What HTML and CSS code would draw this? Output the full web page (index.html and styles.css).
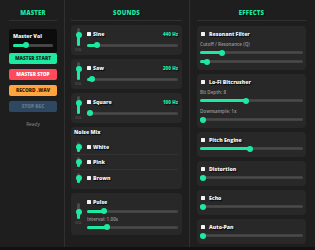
FILE: index.html
```html
<!DOCTYPE html>
<html>
<head>
<meta charset="utf-8">
<link rel="stylesheet" href="styles.css">
</head>
<body>
<div class="app">
  <section class="col col-master">
    <h2 class="col-title">MASTER</h2>
    <div class="vol-box">
      <div class="vol-box-label">Master Vol</div>
      <div class="slider-row"><div class="track" style="--v:.3"><div class="fill"></div></div></div>
    </div>
    <div class="btn-group">
      <button class="btn btn-start">MASTER START</button>
      <button class="btn btn-stop">MASTER STOP</button>
    </div>
    <div class="btn-group btn-group-rec">
      <button class="btn btn-rec">RECORD .WAV</button>
      <button class="btn btn-stoprec" disabled>STOP REC</button>
    </div>
    <div class="status">Ready</div>
  </section>

  <section class="col col-sounds">
    <h2 class="col-title">SOUNDS</h2>
    <div class="stack sounds-stack">
      <div class="card sound">
        <div class="vol">
          <div class="vtrack" style="--v:.7"><div class="vfill"></div></div>
          <span class="vol-label">VOL</span>
        </div>
        <div class="sound-main">
          <div class="sound-head">
            <label class="check"><span class="box"></span><span class="name">Sine</span></label>
            <span class="freq">440 Hz</span>
          </div>
          <div class="slider-row"><div class="track" style="--v:.08"><div class="fill"></div></div></div>
        </div>
      </div>
      <div class="card sound">
        <div class="vol">
          <div class="vtrack" style="--v:.7"><div class="vfill"></div></div>
          <span class="vol-label">VOL</span>
        </div>
        <div class="sound-main">
          <div class="sound-head">
            <label class="check"><span class="box"></span><span class="name">Saw</span></label>
            <span class="freq">200 Hz</span>
          </div>
          <div class="slider-row"><div class="track" style="--v:.025"><div class="fill"></div></div></div>
        </div>
      </div>
      <div class="card sound">
        <div class="vol">
          <div class="vtrack" style="--v:.7"><div class="vfill"></div></div>
          <span class="vol-label">VOL</span>
        </div>
        <div class="sound-main">
          <div class="sound-head">
            <label class="check"><span class="box"></span><span class="name">Square</span></label>
            <span class="freq">100 Hz</span>
          </div>
          <div class="slider-row"><div class="track" style="--v:0"><div class="fill"></div></div></div>
        </div>
      </div>
      <div class="card noise">
        <div class="card-title">Noise Mix</div>
        <div class="noise-row">
          <div class="vol"><div class="vtrack vtrack-mini" style="--v:.5"><div class="vfill"></div></div></div>
          <label class="check"><span class="box"></span><span class="name">White</span></label>
        </div>
        <div class="noise-row">
          <div class="vol"><div class="vtrack vtrack-mini" style="--v:.5"><div class="vfill"></div></div></div>
          <label class="check"><span class="box"></span><span class="name">Pink</span></label>
        </div>
        <div class="noise-row">
          <div class="vol"><div class="vtrack vtrack-mini" style="--v:.5"><div class="vfill"></div></div></div>
          <label class="check"><span class="box"></span><span class="name">Brown</span></label>
        </div>
      </div>
      <div class="card sound pulse">
        <div class="vol">
          <div class="vtrack vtrack-pulse" style="--v:.4"><div class="vfill"></div></div>
          <span class="vol-label">VOL</span>
        </div>
        <div class="sound-main">
          <div class="sound-head pulse-head">
            <label class="check"><span class="box"></span><span class="name">Pulse</span></label>
          </div>
          <div class="slider-row slider-row-s"><div class="track" style="--v:.17"><div class="fill"></div></div></div>
          <div class="fx-label">Interval: 1.00s</div>
          <div class="slider-row slider-row-s"><div class="track" style="--v:.2"><div class="fill"></div></div></div>
        </div>
      </div>
    </div>
  </section>

  <section class="col col-effects">
    <h2 class="col-title">EFFECTS</h2>
    <div class="stack fx-stack">
      <div class="card fx">
        <label class="check fx-check"><span class="box"></span><span class="name">Resonant Filter</span></label>
        <div class="fx-label">Cutoff / Resonance (Q)</div>
        <div class="slider-row"><div class="track" style="--v:.2"><div class="fill"></div></div></div>
        <div class="slider-row"><div class="track" style="--v:.04"><div class="fill"></div></div></div>
      </div>
      <div class="card fx">
        <label class="check fx-check"><span class="box"></span><span class="name">Lo-Fi Bitcrusher</span></label>
        <div class="fx-label">Bit Depth: 8</div>
        <div class="slider-row"><div class="track" style="--v:.44"><div class="fill"></div></div></div>
        <div class="fx-label">Downsample: 1x</div>
        <div class="slider-row"><div class="track" style="--v:0"><div class="fill"></div></div></div>
      </div>
      <div class="card fx">
        <label class="check fx-check"><span class="box"></span><span class="name">Pitch Engine</span></label>
        <div class="slider-row"><div class="track" style="--v:.48"><div class="fill"></div></div></div>
      </div>
      <div class="card fx">
        <label class="check fx-check"><span class="box"></span><span class="name">Distortion</span></label>
        <div class="slider-row"><div class="track" style="--v:0"><div class="fill"></div></div></div>
      </div>
      <div class="card fx">
        <label class="check fx-check"><span class="box"></span><span class="name">Echo</span></label>
        <div class="slider-row"><div class="track" style="--v:0"><div class="fill"></div></div></div>
      </div>
      <div class="card fx">
        <label class="check fx-check"><span class="box"></span><span class="name">Auto-Pan</span></label>
        <div class="slider-row"><div class="track" style="--v:0"><div class="fill"></div></div></div>
      </div>
    </div>
  </section>
</div>
</body>
</html>
```

FILE: styles.css
```css
* { box-sizing: border-box; }

html { background: #111; }

body {
  margin: 0;
  background: #111;
  font-family: "Open Sans", "Noto Sans", sans-serif;
  color: #eee;
}

.app {
  display: grid;
  grid-template-columns: 65px 125px 1fr;
  height: 247px;
  background: #1e1e1e;
  overflow: hidden;
}

.col {
  border-right: 1px solid #303030;
  min-width: 0;
}
.col-effects { border-right: none; }

.col-master { padding: 0 7px 0 9px; }
.col-sounds { padding: 0 7px 0 6px; }
.col-effects { padding: 0 9px 0 7px; }

.col-title {
  margin: 0;
  padding: 8px 0 2px;
  line-height: 10px;
  height: 21px;
  font-size: 6px;
  font-weight: 800;
  letter-spacing: 0.2px;
  color: #1de9a0;
  text-align: center;
  border-bottom: 1px solid #303030;
  text-shadow: 1px 1px 1px rgba(0,0,0,.7);
}

/* master */
.vol-box {
  margin-top: 8px;
  background: #0c0c0c;
  border-radius: 3px;
  padding: 4px 4px;
  height: 24px;
  display: flex;
  flex-direction: column;
  gap: 2px;
}
.vol-box-label {
  font-size: 5.2px;
  font-weight: 800;
  line-height: 6px;
  color: #f2f2f2;
}
.vol-box .slider-row { height: 8px; }

.btn-group {
  display: flex;
  flex-direction: column;
  gap: 5px;
}
.col-master > .btn-group:first-of-type {
  margin-top: 8px;
  padding-bottom: 4px;
  border-bottom: 1px solid #2a2a2a;
}
.btn-group-rec { padding-top: 5px; }

.btn {
  display: block;
  width: 100%;
  height: 11px;
  padding: 0;
  border: none;
  border-radius: 2px;
  font-family: inherit;
  font-size: 4.8px;
  font-weight: 800;
  line-height: 11px;
  text-align: center;
}
.btn-start { background: #1de9a0; color: #0d2b20; }
.btn-stop { background: #ff4a5c; color: #fff; }
.btn-rec { background: #ffa43f; color: #3a1e00; }
.btn-stoprec { background: #2f4862; color: #5f7893; }

.status {
  margin-top: 9px;
  font-size: 4.8px;
  line-height: 6px;
  text-align: center;
  color: #8a8a8a;
}

/* stacks */
.stack {
  display: flex;
  flex-direction: column;
  gap: 4px;
}
.sounds-stack { padding-top: 4px; }
.fx-stack { padding-top: 5px; }

.card {
  background: #282828;
  border-radius: 4px;
}

/* sliders */
.slider-row {
  height: 9px;
  display: flex;
  align-items: center;
}
.track {
  position: relative;
  flex: 1;
  height: 3px;
  border-radius: 2px;
  background: #4a4a4a;
  box-shadow: inset 0 0 0 0.5px #3a3a3a;
}
.fill {
  position: relative;
  height: 100%;
  width: calc(3px + (100% - 6px) * var(--v));
  background: #1de9a0;
  border-radius: 2px;
}
.fill::after {
  content: "";
  position: absolute;
  right: -3px;
  top: 50%;
  width: 6px;
  height: 6px;
  margin-top: -3px;
  border-radius: 50%;
  background: #1de9a0;
}

.vol {
  width: 9px;
  flex: none;
  display: flex;
  flex-direction: column;
  align-items: center;
  gap: 1px;
}
.vtrack {
  position: relative;
  width: 3px;
  height: 18px;
  border-radius: 2px;
  background: #4a4a4a;
  display: flex;
  flex-direction: column;
  justify-content: flex-end;
}
.vtrack-mini { height: 10px; }
.vtrack-pulse { height: 16px; }
.vfill {
  position: relative;
  width: 100%;
  height: calc(3px + (100% - 6px) * var(--v));
  background: #1de9a0;
  border-radius: 2px;
}
.vfill::after {
  content: "";
  position: absolute;
  top: -3px;
  left: 50%;
  width: 6px;
  height: 6px;
  margin-left: -3px;
  border-radius: 50%;
  background: #1de9a0;
}
.vol-label {
  font-size: 3.6px;
  line-height: 5px;
  color: #666;
}

/* checkbox labels */
.check {
  display: flex;
  align-items: center;
  gap: 2px;
}
.box {
  width: 4px;
  height: 4px;
  border-radius: 0.5px;
  background: #f4f4f4;
  flex: none;
}
.name, .card-title {
  font-size: 5.2px;
  font-weight: 800;
  color: #f4f4f4;
  text-shadow: 1px 1px 1px rgba(0,0,0,.9);
}

/* sound cards */
.sound {
  display: flex;
  align-items: center;
  gap: 4px;
  padding: 3px 4px 3px 3px;
}
.sound-main {
  flex: 1;
  align-self: flex-start;
  padding-top: 1px;
}
.sound-head {
  height: 10px;
  display: flex;
  align-items: center;
  justify-content: space-between;
}
.sound-main .slider-row { height: 10px; margin-top: 1px; }
.freq {
  font-size: 4.6px;
  font-weight: 800;
  color: #1de9a0;
  text-shadow: 1px 1px 1px rgba(0,0,0,.7);
}

.pulse { padding: 3px 4px 4px 3px; }
.pulse .sound-main { align-self: auto; padding-top: 0; }
.pulse-head { height: 11px; }
.pulse .sound-main .slider-row-s { height: 8px; margin-top: 0; }

/* noise */
.noise {
  padding: 1px 4px 4px 3px;
}
.card-title {
  line-height: 8px;
  margin-bottom: 4px;
}
.noise-row {
  height: 15px;
  display: flex;
  align-items: center;
  gap: 4px;
  border-bottom: 1px solid #333;
}
.noise-row:last-child { border-bottom: none; }

/* effects */
.fx {
  padding: 4px 3px;
}
.fx-check {
  height: 8px;
  gap: 4px;
  padding-left: 1px;
}
.fx-label {
  height: 8px;
  line-height: 8px;
  font-size: 4.6px;
  font-weight: 600;
  color: #9a9a9a;
}
.fx .fx-label { margin-top: 2px; }
.fx .fx-label + .slider-row { height: 9px; }
```
